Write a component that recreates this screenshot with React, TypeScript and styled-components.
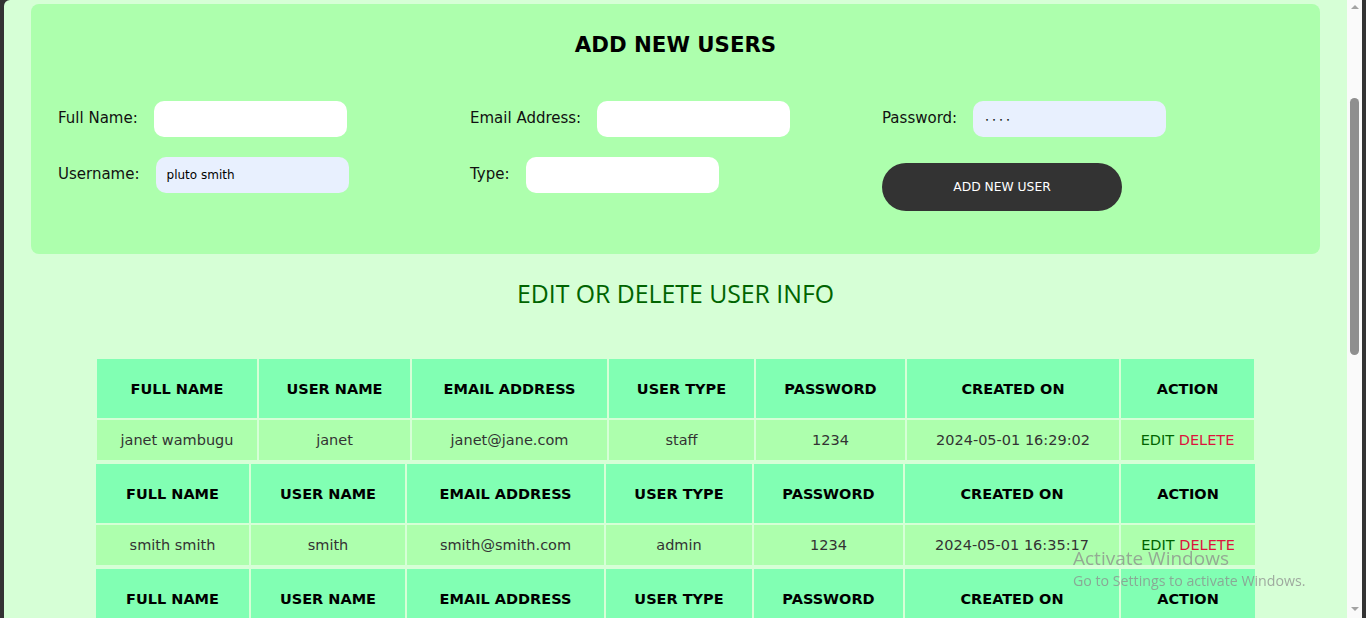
import React from "react";
import styled, { createGlobalStyle } from "styled-components";

interface User {
  fullName: string;
  userName: string;
  email: string;
  type: string;
  password: string;
  createdOn: string;
  cols: number[];
}

const users: User[] = [
  {
    fullName: "janet wambugu",
    userName: "janet",
    email: "janet@jane.com",
    type: "staff",
    password: "1234",
    createdOn: "2024-05-01 16:29:02",
    cols: [160, 151, 195, 145, 149, 212, 133],
  },
  {
    fullName: "smith smith",
    userName: "smith",
    email: "smith@smith.com",
    type: "admin",
    password: "1234",
    createdOn: "2024-05-01 16:35:17",
    cols: [153, 154, 197, 146, 149, 214, 134],
  },
  {
    fullName: "pluto smith",
    userName: "pluto",
    email: "pluto@smith.com",
    type: "staff",
    password: "1234",
    createdOn: "2024-05-01 16:41:08",
    cols: [153, 154, 197, 146, 149, 214, 134],
  },
];

const headings = ["FULL NAME", "USER NAME", "EMAIL ADDRESS", "USER TYPE", "PASSWORD", "CREATED ON", "ACTION"];

export default function App() {
  return (
    <>
      <GlobalStyle />
      <Frame>
        <Viewport>
          <Content>
            <AddPanel>
              <PanelTitle>ADD NEW USERS</PanelTitle>
              <FormGrid>
                <FormColumn>
                  <Field>
                    <Label>Full Name:</Label>
                    <TextInput type="text" />
                  </Field>
                  <Field>
                    <Label>Username:</Label>
                    <TextInput type="text" defaultValue="pluto smith" $filled />
                  </Field>
                </FormColumn>
                <FormColumn>
                  <Field>
                    <Label>Email Address:</Label>
                    <TextInput type="email" />
                  </Field>
                  <Field>
                    <Label>Type:</Label>
                    <TextInput type="text" />
                  </Field>
                </FormColumn>
                <FormColumn>
                  <Field>
                    <Label>Password:</Label>
                    <PasswordInput type="password" defaultValue="1234" $filled />
                  </Field>
                  <AddButton>ADD NEW USER</AddButton>
                </FormColumn>
              </FormGrid>
            </AddPanel>

            <SectionTitle>EDIT OR DELETE USER INFO</SectionTitle>

            <Tables>
              {users.map((u) => (
                <UserTable key={u.userName}>
                  <colgroup>
                    {u.cols.map((w, i) => (
                      <col key={i} style={{ width: w }} />
                    ))}
                  </colgroup>
                  <thead>
                    <tr>
                      {headings.map((h) => (
                        <HeadCell key={h}>{h}</HeadCell>
                      ))}
                    </tr>
                  </thead>
                  <tbody>
                    <tr>
                      <DataCell>{u.fullName}</DataCell>
                      <DataCell>{u.userName}</DataCell>
                      <DataCell>{u.email}</DataCell>
                      <DataCell>{u.type}</DataCell>
                      <DataCell>{u.password}</DataCell>
                      <DataCell>{u.createdOn}</DataCell>
                      <DataCell>
                        <ActionLink $kind="edit">EDIT</ActionLink> <ActionLink $kind="delete">DELETE</ActionLink>
                      </DataCell>
                    </tr>
                  </tbody>
                </UserTable>
              ))}
            </Tables>
          </Content>
          <ScrollRail>
            <ArrowUp />
            <Thumb />
            <ArrowDown />
          </ScrollRail>
        </Viewport>
      </Frame>
      <Watermark>
        <WatermarkTitle>Activate Windows</WatermarkTitle>
        <WatermarkText>Go to Settings to activate Windows.</WatermarkText>
      </Watermark>
    </>
  );
}

const GlobalStyle = createGlobalStyle`
  html, body {
    margin: 0;
    padding: 0;
    background: #333333;
    overflow: hidden;
  }
  * {
    box-sizing: border-box;
  }
`;

const Frame = styled.div`
  height: 618px;
  padding: 0 4px;
  display: flex;
  overflow: hidden;
`;

const Viewport = styled.div`
  flex: 1;
  display: flex;
  background: #d6ffd6;
  border-top-left-radius: 6px;
  overflow: hidden;
`;

const Content = styled.main`
  flex: 1;
  padding-top: 4px;
  overflow: hidden;
  font-family: "DejaVu Sans", "Open Sans", sans-serif;
`;

const AddPanel = styled.section`
  margin: 0 27px;
  padding: 28px 27px 43px;
  background: #adffad;
  border-radius: 8px;
`;

const PanelTitle = styled.h2`
  margin: 0 0 43px;
  text-align: center;
  font-size: 21.3px;
  line-height: 26px;
  font-weight: bold;
  color: #000;
`;

const FormGrid = styled.div`
  display: grid;
  grid-template-columns: repeat(3, 412px);
`;

const FormColumn = styled.div`
  display: flex;
  flex-direction: column;
  align-items: flex-start;
  gap: 20px;
`;

const Field = styled.div`
  display: flex;
  align-items: center;
  gap: 16px;
`;

const Label = styled.label`
  font-size: 15px;
  color: #111;
  margin-top: -2px;
`;

const TextInput = styled.input<{ $filled?: boolean }>`
  width: 193px;
  height: 36px;
  border: none;
  outline: none;
  border-radius: 10px;
  padding: 0 11px;
  background: ${(p) => (p.$filled ? "#e8f0fe" : "#ffffff")};
  font-family: "DejaVu Sans", sans-serif;
  font-size: 12px;
  color: #000;
`;

const PasswordInput = styled(TextInput)`
  padding: 0 12px;
  font-size: 6px;
  letter-spacing: 3.5px;
`;

const AddButton = styled.button`
  margin-top: 6px;
  width: 240px;
  height: 48px;
  border: none;
  border-radius: 24px;
  background: #333333;
  color: #fff;
  font-family: "DejaVu Sans", sans-serif;
  font-size: 12.3px;
  cursor: pointer;
`;

const SectionTitle = styled.h3`
  margin: 24px 0 49px;
  text-align: center;
  font-family: "Open Sans", sans-serif;
  font-size: 24.8px;
  line-height: 30px;
  font-weight: normal;
  color: #006400;
`;

const Tables = styled.div`
  display: flex;
  flex-direction: column;
  align-items: center;
`;

const UserTable = styled.table`
  width: 1161px;
  table-layout: fixed;
  border-spacing: 2px;
`;

const HeadCell = styled.th`
  height: 59px;
  padding: 0 6px;
  background: #81ffb3;
  font-size: 14.5px;
  font-weight: bold;
  color: #000;
  text-align: center;
`;

const DataCell = styled.td`
  height: 40px;
  padding: 0 6px;
  background: #adffad;
  font-size: 14.5px;
  color: #333;
  text-align: center;
  white-space: nowrap;
`;

const ActionLink = styled.span<{ $kind: "edit" | "delete" }>`
  color: ${(p) => (p.$kind === "edit" ? "#006400" : "#dc143c")};
  cursor: pointer;
`;

const ScrollRail = styled.div`
  width: 15px;
  background: #fafafa;
  display: flex;
  flex-direction: column;
  align-items: center;
`;

const ArrowUp = styled.div`
  margin-top: 5px;
  width: 0;
  height: 0;
  border-left: 4px solid transparent;
  border-right: 4px solid transparent;
  border-bottom: 4px solid #a3a3a3;
`;

const Thumb = styled.div`
  margin-top: 89px;
  width: 9px;
  height: 257px;
  border-radius: 5px;
  background: #8f8f8f;
`;

const ArrowDown = styled.div`
  margin-top: auto;
  margin-bottom: 7px;
  width: 0;
  height: 0;
  border-left: 4px solid transparent;
  border-right: 4px solid transparent;
  border-top: 4px solid #a3a3a3;
`;

const Watermark = styled.div`
  position: fixed;
  left: 1073px;
  top: 545px;
  font-family: "Open Sans", sans-serif;
  color: rgba(140, 140, 140, 0.75);
  pointer-events: none;
`;

const WatermarkTitle = styled.div`
  font-size: 19px;
  line-height: 26px;
`;

const WatermarkText = styled.div`
  font-size: 14.2px;
  line-height: 20px;
`;
